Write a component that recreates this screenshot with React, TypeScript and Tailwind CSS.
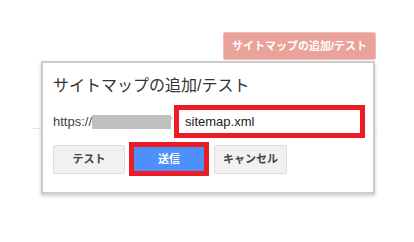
import React from 'react'

const font = { fontFamily: '"Liberation Sans", "Noto Sans CJK JP", sans-serif' }

export default function App() {
  return (
    <div className="relative w-[414px] h-[242px] bg-white overflow-hidden" style={font}>
      {/* page rule behind the dialog */}
      <div className="absolute left-[33px] top-[128px] w-[344px] h-px bg-[#e3e3e3]" />

      <div className="relative pt-[32px] pl-[41px] w-[376px]">
        <div className="flex justify-end">
          <button className="h-[28px] w-[153px] border border-[#f3bcb6] bg-[#e9a39b] rounded-[2px] text-white text-[11px] font-bold">
            サイトマップの追加/テスト
          </button>
        </div>

        <div className="mt-[1px] w-[334px] bg-white border-2 border-[#cccccc] shadow-[0_2px_4px_rgba(0,0,0,0.2)] pl-[10px] pt-[11px] pb-[16px]">
          <div className="h-[24px] leading-[24px] text-[16px] text-[#333333]">サイトマップの追加/テスト</div>

          <div className="mt-[7px] flex items-center h-[33px]">
            <span className="text-[13px] text-[#444444]">https://</span>
            <span className="w-[79px] h-[14px] bg-[#c1c1c1]" />
            <span className="w-[2px] text-[10px] leading-none text-[#aaaaaa]">'</span>
            <div className="ml-[1px] w-[191px] h-[33px] border-[5px] border-[#ed1c24] bg-white flex items-center pl-[6px]">
              <span className="text-[13px] text-[#222222]">sitemap.xml</span>
            </div>
          </div>

          <div className="mt-[4px] flex items-center h-[34px]">
            <button className="h-[29px] w-[72px] bg-[#f1f1f1] border border-[#dcdcdc] rounded-[2px] text-[11px] font-bold text-[#444444]">
              テスト
            </button>
            <div className="ml-[4px] w-[80px] h-[34px] border-[5px] border-[#ed1c24] bg-[#4d8ffb] flex items-center justify-center">
              <span className="text-[11px] font-bold text-white">送信</span>
            </div>
            <button className="ml-[5px] h-[29px] w-[73px] bg-[#f1f1f1] border border-[#dcdcdc] rounded-[2px] text-[11px] font-bold text-[#444444]">
              キャンセル
            </button>
          </div>
        </div>
      </div>
    </div>
  )
}
